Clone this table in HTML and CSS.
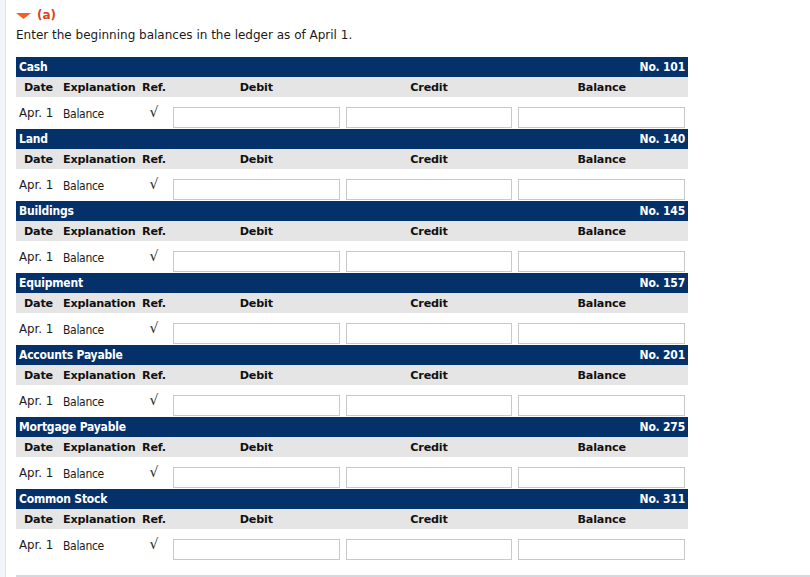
FILE: index.html
```html
<!DOCTYPE html>
<html>
<head>
<meta charset="utf-8">
<link rel="stylesheet" href="styles.css">
</head>
<body>
<div class="page">
  <div class="rail"></div>
  <div class="content">
    <div class="part-title">
      <svg class="caret" width="15" height="6" viewBox="0 0 15 6"><polygon points="0,0 15,0 7.5,6" fill="#f0612a"/></svg>
      <span class="part-label">(a)</span>
    </div>
    <p class="instructions">Enter the beginning balances in the ledger as of April 1.</p>

    <div class="ledger">
      <div class="acct"><span>Cash</span><span>No. 101</span></div>
      <div class="cols"><span class="c-date">Date</span><span class="c-exp">Explanation</span><span class="c-ref">Ref.</span><span class="c-amt">Debit</span><span class="c-amt">Credit</span><span class="c-amt">Balance</span></div>
      <div class="row"><span class="d-date">Apr. 1</span><span class="d-exp">Balance</span><span class="d-ref">√</span><span class="cell"><input class="amt" type="text"></span><span class="cell"><input class="amt" type="text"></span><span class="cell"><input class="amt" type="text"></span></div>
    </div>

    <div class="ledger">
      <div class="acct"><span>Land</span><span>No. 140</span></div>
      <div class="cols"><span class="c-date">Date</span><span class="c-exp">Explanation</span><span class="c-ref">Ref.</span><span class="c-amt">Debit</span><span class="c-amt">Credit</span><span class="c-amt">Balance</span></div>
      <div class="row"><span class="d-date">Apr. 1</span><span class="d-exp">Balance</span><span class="d-ref">√</span><span class="cell"><input class="amt" type="text"></span><span class="cell"><input class="amt" type="text"></span><span class="cell"><input class="amt" type="text"></span></div>
    </div>

    <div class="ledger">
      <div class="acct"><span>Buildings</span><span>No. 145</span></div>
      <div class="cols"><span class="c-date">Date</span><span class="c-exp">Explanation</span><span class="c-ref">Ref.</span><span class="c-amt">Debit</span><span class="c-amt">Credit</span><span class="c-amt">Balance</span></div>
      <div class="row"><span class="d-date">Apr. 1</span><span class="d-exp">Balance</span><span class="d-ref">√</span><span class="cell"><input class="amt" type="text"></span><span class="cell"><input class="amt" type="text"></span><span class="cell"><input class="amt" type="text"></span></div>
    </div>

    <div class="ledger">
      <div class="acct"><span>Equipment</span><span>No. 157</span></div>
      <div class="cols"><span class="c-date">Date</span><span class="c-exp">Explanation</span><span class="c-ref">Ref.</span><span class="c-amt">Debit</span><span class="c-amt">Credit</span><span class="c-amt">Balance</span></div>
      <div class="row"><span class="d-date">Apr. 1</span><span class="d-exp">Balance</span><span class="d-ref">√</span><span class="cell"><input class="amt" type="text"></span><span class="cell"><input class="amt" type="text"></span><span class="cell"><input class="amt" type="text"></span></div>
    </div>

    <div class="ledger">
      <div class="acct"><span>Accounts Payable</span><span>No. 201</span></div>
      <div class="cols"><span class="c-date">Date</span><span class="c-exp">Explanation</span><span class="c-ref">Ref.</span><span class="c-amt">Debit</span><span class="c-amt">Credit</span><span class="c-amt">Balance</span></div>
      <div class="row"><span class="d-date">Apr. 1</span><span class="d-exp">Balance</span><span class="d-ref">√</span><span class="cell"><input class="amt" type="text"></span><span class="cell"><input class="amt" type="text"></span><span class="cell"><input class="amt" type="text"></span></div>
    </div>

    <div class="ledger">
      <div class="acct"><span>Mortgage Payable</span><span>No. 275</span></div>
      <div class="cols"><span class="c-date">Date</span><span class="c-exp">Explanation</span><span class="c-ref">Ref.</span><span class="c-amt">Debit</span><span class="c-amt">Credit</span><span class="c-amt">Balance</span></div>
      <div class="row"><span class="d-date">Apr. 1</span><span class="d-exp">Balance</span><span class="d-ref">√</span><span class="cell"><input class="amt" type="text"></span><span class="cell"><input class="amt" type="text"></span><span class="cell"><input class="amt" type="text"></span></div>
    </div>

    <div class="ledger">
      <div class="acct"><span>Common Stock</span><span>No. 311</span></div>
      <div class="cols"><span class="c-date">Date</span><span class="c-exp">Explanation</span><span class="c-ref">Ref.</span><span class="c-amt">Debit</span><span class="c-amt">Credit</span><span class="c-amt">Balance</span></div>
      <div class="row"><span class="d-date">Apr. 1</span><span class="d-exp">Balance</span><span class="d-ref">√</span><span class="cell"><input class="amt" type="text"></span><span class="cell"><input class="amt" type="text"></span><span class="cell"><input class="amt" type="text"></span></div>
    </div>

    <div class="rule"></div>
  </div>
</div>
</body>
</html>
```
FILE: styles.css
```css
html, body {
  margin: 0;
  padding: 0;
  background: #ffffff;
}
body {
  font-family: "DejaVu Sans", Verdana, sans-serif;
  color: #1a1a1a;
}
.page {
  display: flex;
  min-height: 577px;
}
.rail {
  width: 5px;
  flex: none;
  background: #f2f6fb;
  border-right: 1px solid #dde4ec;
}
.content {
  padding-left: 10px;
  width: 672px;
}
.part-title {
  display: flex;
  align-items: center;
  gap: 6px;
  height: 16px;
  margin-top: 7px;
}
.caret {
  display: block;
  margin-top: 1px;
}
.part-label {
  color: #d8461c;
  font-weight: bold;
  font-size: 12px;
  line-height: 16px;
}
.instructions {
  margin: 4px 0 0;
  font-size: 12px;
  line-height: 16px;
  height: 30px;
}
.ledger {
  display: flex;
  flex-direction: column;
}
.acct {
  display: flex;
  justify-content: space-between;
  background: #04316a;
  color: #ffffff;
  height: 20px;
  line-height: 20px;
  padding: 0 3px;
  font-family: "DejaVu Sans Condensed", "DejaVu Sans", sans-serif;
  font-weight: bold;
  font-size: 12px;
  letter-spacing: -0.2px;
}
.cols, .row {
  display: grid;
  grid-template-columns: 42px 80px 32px 1fr 1fr 1fr;
}
.cols {
  background: #e5e5e5;
  box-sizing: border-box;
  height: 20px;
  padding-top: 1px;
  line-height: 19px;
  font-weight: bold;
  font-size: 11.2px;
  color: #111;
  letter-spacing: -0.2px;
}
.c-date { padding-left: 8px; }
.c-exp { padding-left: 5px; }
.c-ref { padding-left: 4px; }
.c-amt { text-align: center; }
.row {
  height: 32px;
  font-size: 12px;
}
.d-date {
  padding-left: 3px;
  padding-top: 8px;
  line-height: 16px;
  font-size: 11.8px;
}
.d-exp {
  padding-left: 5px;
  padding-top: 9px;
  line-height: 16px;
  font-family: "DejaVu Sans Condensed", "DejaVu Sans", sans-serif;
  font-size: 12px;
  letter-spacing: -0.3px;
}
.d-ref {
  text-align: center;
  padding-top: 6px;
  line-height: 18px;
  font-size: 14px;
}
.cell {
  padding: 10px 3px 0;
}
.amt {
  display: block;
  box-sizing: border-box;
  width: 100%;
  height: 21px;
  margin: 0;
  border: 1px solid #c9c9c9;
  background: #fff;
  padding: 0 3px;
  font-size: 12px;
}
.rule {
  margin-top: 14px;
  border-top: 2px solid #d3d9e0;
  width: 800px;
}
```
